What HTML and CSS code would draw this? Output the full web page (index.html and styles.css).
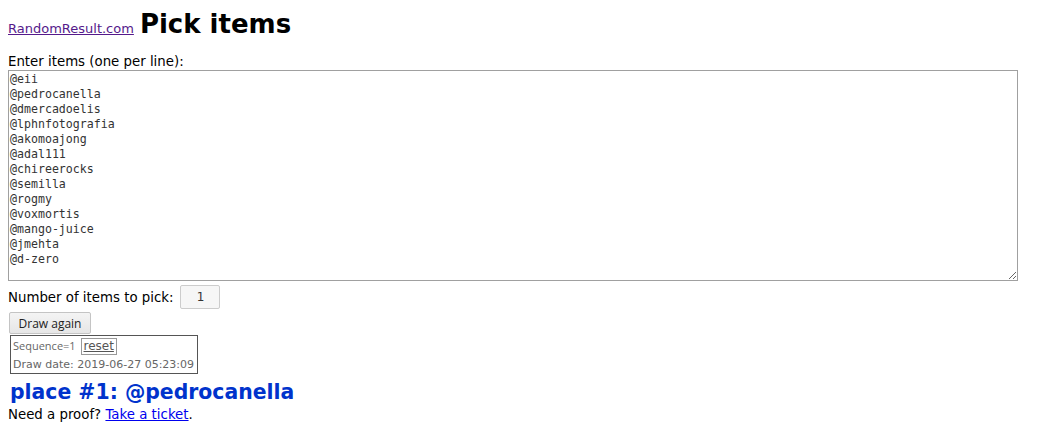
FILE: index.html
```html
<!DOCTYPE html>
<html>
<head>
<meta charset="utf-8">
<link rel="stylesheet" href="styles.css">
</head>
<body>
<div class="header">
  <a class="site" href="#">RandomResult.com</a>
  <h1 class="title">Pick items</h1>
</div>
<form class="form">
  <label class="label">Enter items (one per line):</label>
  <textarea class="items">@eii
@pedrocanella
@dmercadoelis
@lphnfotografia
@akomoajong
@adal111
@chireerocks
@semilla
@rogmy
@voxmortis
@mango-juice
@jmehta
@d-zero</textarea>
  <div class="count-row">
    <span>Number of items to pick:</span>
    <input class="count" type="text" value="1">
  </div>
  <div class="draw-row"><button class="draw" type="button">Draw again</button></div>
  <div class="info">
    <div class="seq">Sequence=1 <span class="reset">reset</span></div>
    <div class="date">Draw date: 2019-06-27 05:23:09</div>
  </div>
</form>
<div class="result">place #1: @pedrocanella</div>
<div class="proof">Need a proof? <a class="ticket" href="#">Take a ticket</a>.</div>
</body>
</html>
```

FILE: styles.css
```css
body {
  margin: 8px;
  font-family: "DejaVu Sans", sans-serif;
  font-size: 13.33px;
  color: #000;
  background: #fff;
}
.header {
  display: flex;
  align-items: baseline;
  gap: 6px;
  height: 45px;
}
.site {
  color: #551a8b;
  font-size: 13px;
}
.title {
  margin: 0;
  font-size: 26px;
  font-weight: bold;
  line-height: 32px;
}
.form {
  display: flex;
  flex-direction: column;
  align-items: flex-start;
}
.label {
  line-height: 17px;
}
.items {
  box-sizing: border-box;
  width: 1010px;
  height: 211px;
  margin: 0;
  padding: 1px 1px;
  border: 1px solid #a0a0a0;
  font-family: "DejaVu Sans Mono", monospace;
  font-size: 11.6px;
  line-height: 15px;
  color: #333;
  resize: both;
}
.count-row {
  display: flex;
  align-items: center;
  gap: 7px;
  margin-top: 4px;
}
.count {
  box-sizing: border-box;
  width: 40px;
  height: 24px;
  border: 1px solid #ccc;
  border-radius: 2px;
  background: #f6f6f6;
  text-align: center;
  font-family: "DejaVu Sans", sans-serif;
  font-size: 12px;
  color: #333;
  padding: 0;
}
.draw-row {
  margin-top: 3px;
}
.draw {
  box-sizing: border-box;
  width: 82px;
  height: 22px;
  margin-left: 1px;
  border: 1px solid #c4c4c4;
  border-radius: 2px;
  background: linear-gradient(#f4f4f4, #e6e6e6);
  font-family: "Open Sans", sans-serif;
  font-size: 12px;
  color: #222;
  padding: 0;
}
.info {
  margin: 1px 0 0 2px;
  border: 1px solid #555;
  padding: 2px 3px 0 2px;
  font-size: 11px;
  color: #666;
  line-height: 16px;
}
.seq {
  font-family: "Open Sans", sans-serif;
  height: 19px;
}
.reset {
  display: inline-block;
  border: 1px solid #999;
  padding: 0 2px;
  margin-left: 2px;
  font-family: "DejaVu Sans", sans-serif;
  font-size: 12px;
  line-height: 15px;
  text-decoration: underline;
  color: #555;
}
.result {
  margin: 5px 0 0 2px;
  font-size: 20.4px;
  font-weight: bold;
  color: #0033cc;
  line-height: 26px;
}
.proof {
  margin-top: 1px;
  line-height: 17px;
}
.ticket {
  color: #0000ee;
}
```
